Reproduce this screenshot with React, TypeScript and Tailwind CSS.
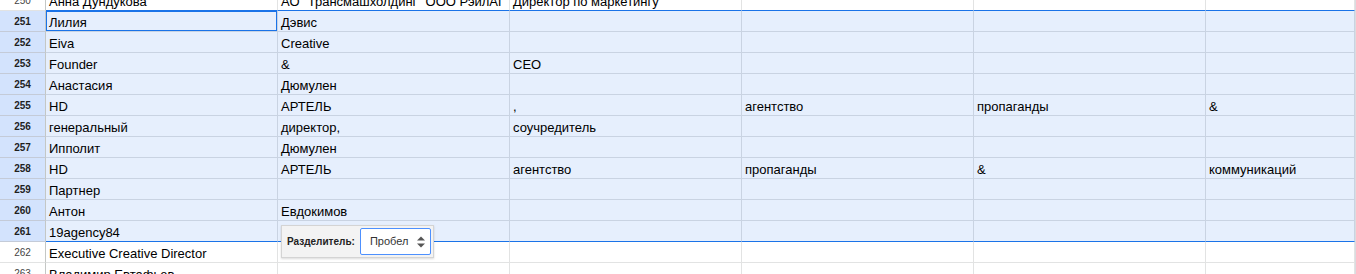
import React from 'react';

const widths = ['w-[232px]', 'w-[232px]', 'w-[232px]', 'w-[232px]', 'w-[232px]', 'w-[149px]'];

type Row = { n: number; cells: string[] };

const rows: Row[] = [
  { n: 250, cells: ['Анна Дундукова', 'АО "Трансмашхолдинг" ООО РэилАГ', 'Директор по маркетингу'] },
  { n: 251, cells: ['Лилия', 'Дэвис'] },
  { n: 252, cells: ['Eiva', 'Creative'] },
  { n: 253, cells: ['Founder', '&', 'CEO'] },
  { n: 254, cells: ['Анастасия', 'Дюмулен'] },
  { n: 255, cells: ['HD', 'АРТЕЛЬ', ',', 'агентство', 'пропаганды', '&'] },
  { n: 256, cells: ['генеральный', 'директор,', 'соучредитель'] },
  { n: 257, cells: ['Ипполит', 'Дюмулен'] },
  { n: 258, cells: ['HD', 'АРТЕЛЬ', 'агентство', 'пропаганды', '&', 'коммуникаций'] },
  { n: 259, cells: ['Партнер'] },
  { n: 260, cells: ['Антон', 'Евдокимов'] },
  { n: 261, cells: ['19agency84'] },
  { n: 262, cells: ['Executive Creative Director'] },
  { n: 263, cells: ['Владимир Евтафьев'] },
];

const SortIcon = () => (
  <svg width="10" height="14" viewBox="0 0 10 14" className="text-[#555]">
    <path d="M1 5.5 L5 1.5 L9 5.5 Z" fill="currentColor" />
    <path d="M1 8.5 L5 12.5 L9 8.5 Z" fill="currentColor" />
  </svg>
);

const GridRow: React.FC<{ row: Row }> = ({ row }) => {
  const sel = row.n >= 251 && row.n <= 261;
  const edge = row.n === 250 || row.n === 261;
  const cellBorderB = edge ? 'border-b-[#1a73e8]' : sel ? 'border-b-[#c9d3e2]' : 'border-b-[#e2e3e3]';

  return (
    <div className="flex h-[21px]">
      <div
        className={`w-[46px] shrink-0 flex items-center justify-center border-r border-b border-r-[#c4c7c5] text-[10px] ${
          sel ? 'bg-[#d3e3fd] font-bold text-[#1f1f1f] border-b-[#c4cbd8]' : 'bg-white text-[#444] border-b-[#e2e3e3]'
        }`}
      >
        {row.n}
      </div>
      {widths.map((w, i) => {
        const active = row.n === 251 && i === 0;
        return (
          <div
            key={i}
            className={`${w} shrink-0 relative flex items-end overflow-hidden whitespace-nowrap border-r border-b pl-[3px] pb-[1px] text-[13px] leading-[15px] text-black ${cellBorderB} ${
              sel ? 'bg-[#e6effd] border-r-[#c9d3e2]' : 'bg-white border-r-[#e2e3e3]'
            }`}
          >
            {active && <div className="absolute -inset-[1px] border-2 border-[#1a73e8]" />}
            {row.cells[i] ?? ''}
          </div>
        );
      })}
      <div className="flex-1 border-l border-[#dadce0] bg-white" />
    </div>
  );
};

export default function App() {
  return (
    <div
      className="relative w-[1356px] h-[274px] overflow-hidden bg-white"
      style={{ fontFamily: '"Liberation Sans", Arial, sans-serif' }}
    >
      <div className="-mt-[10px]">
        {rows.map((r) => (
          <GridRow key={r.n} row={r} />
        ))}
      </div>

      {/* delimiter picker popup */}
      <div className="absolute left-[281px] top-[225px] flex h-[33px] w-[153px] items-center gap-[5px] border border-[#d4d4d4] bg-[#f3f3f3] pl-[5px] shadow-[0_1px_2px_rgba(0,0,0,0.15)]">
        <span className="text-[10px] font-bold text-[#222]">Разделитель:</span>
        <div className="flex h-[27px] w-[71px] items-center justify-between rounded-[2px] border border-[#4d90fe] bg-white pl-[9px] pr-[4px]">
          <span className="text-[11px] text-[#333]">Пробел</span>
          <SortIcon />
        </div>
      </div>
    </div>
  );
}
